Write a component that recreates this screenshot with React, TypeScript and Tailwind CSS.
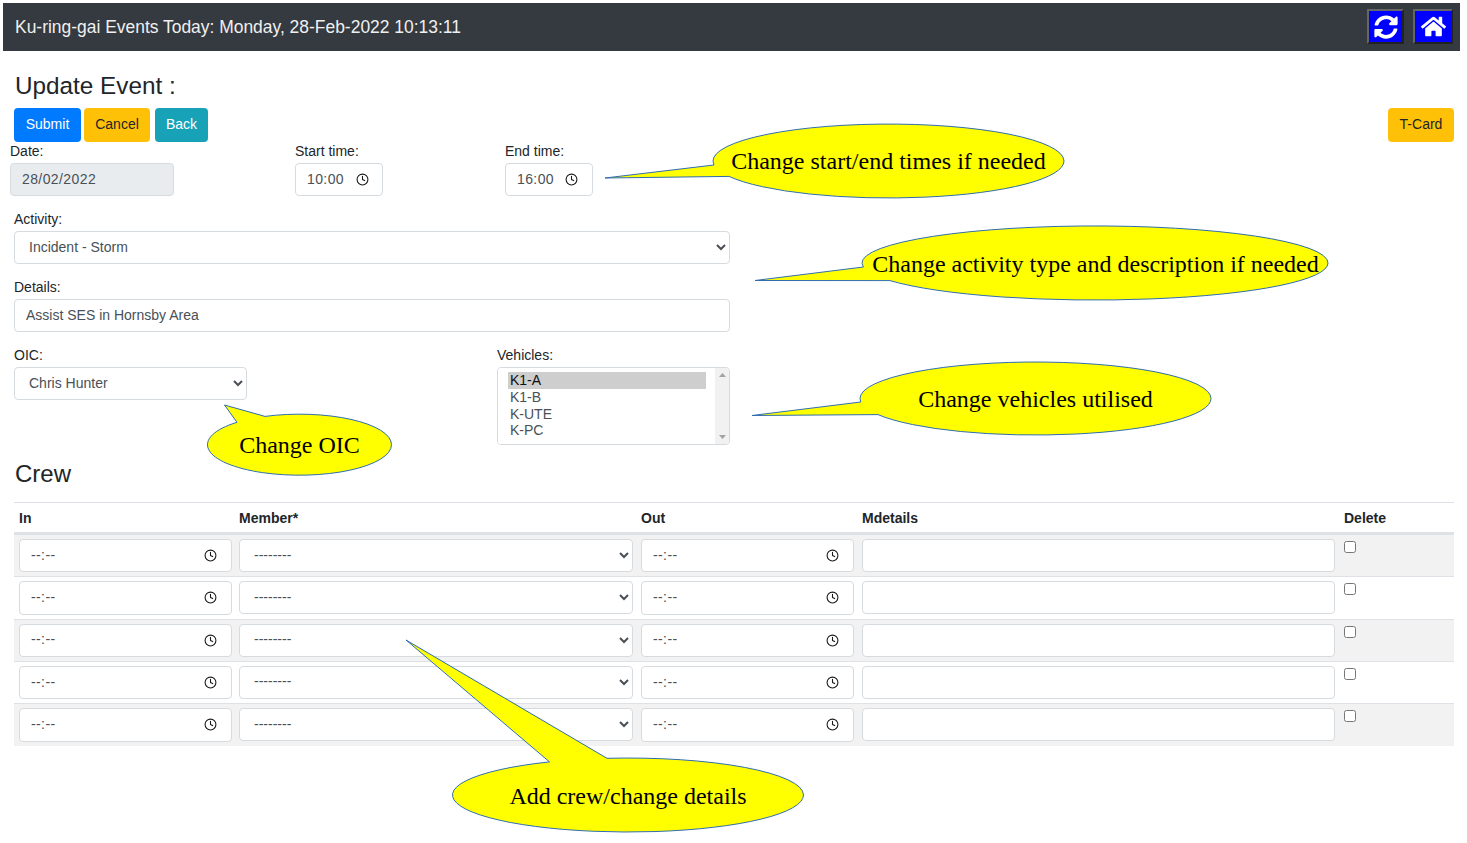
import React from 'react';
import { Clock } from 'lucide-react';
import { FaHome, FaSyncAlt } from 'react-icons/fa';

const fieldClass =
  'block h-[33px] rounded-[4px] border border-[#d6dbe0] px-[11px] pb-[2px] text-sm text-[#495057]';
const selectClass =
  'block h-[33px] rounded-[4px] border border-[#d6dbe0] bg-white pl-[10px] pb-[2px] text-sm text-[#495057]';
const labelClass = 'block h-[21px] text-sm leading-[19px] text-[#212529]';
const btnClass = 'h-[34px] rounded-[4px] pb-[2px] text-sm';
const crewCols = 'grid grid-cols-[221px_402px_221px_481px_1fr]';

// Speech bubbles drawn over the form
const callouts = [
  {
    d: 'M605 178 L714 165 A175.5 37 0 1 1 1064 161 A175.5 37 0 0 1 729 176.4 Z',
    text: 'Change start/end times if needed',
    x: 888.5,
    y: 169,
  },
  {
    d: 'M755 280.5 L863.4 267 A233 37 0 1 1 1328 263 A233 37 0 0 1 890 280.6 Z',
    text: 'Change activity type and description if needed',
    x: 1095.5,
    y: 272,
  },
  {
    d: 'M752 415.5 L860.8 402 A175.5 36.5 0 1 1 1211 398.5 A175.5 36.5 0 0 1 878 414.6 Z',
    text: 'Change vehicles utilised',
    x: 1035.5,
    y: 407,
  },
  {
    d: 'M224.5 405 L265 416.4 A92 30.5 0 0 1 391.5 444.7 A92 30.5 0 1 1 237 422.3 Z',
    text: 'Change OIC',
    x: 299.5,
    y: 453,
  },
  {
    d: 'M406 640 L607 758.3 A175.5 37 0 0 1 803.5 795 A175.5 37 0 1 1 549.5 761.9 Z',
    text: 'Add crew/change details',
    x: 628,
    y: 804,
  },
];

// 24 hour time box, the browser's own time input follows its locale
const TimeField: React.FC<{ value?: string; className: string }> = ({ value = '--:--', className }) => (
  <div className={`flex items-center rounded-[4px] border border-[#d6dbe0] bg-white pl-[11px] ${className}`}>
    <input
      type="text"
      defaultValue={value}
      className="min-w-0 flex-1 bg-transparent pb-[2px] text-sm tracking-[0.4px] text-[#495057]"
    />
    <Clock className="h-[13px] w-[13px] shrink-0 text-[#1a1a1a]" strokeWidth={2} />
  </div>
);

const CrewRow: React.FC<{ striped: boolean }> = ({ striped }) => (
  <div className={`${crewCols} border-t border-[#dee2e6] ${striped ? 'bg-[#f2f2f2]' : ''}`}>
    <div className="p-1 pl-[5px]">
      <TimeField className="h-[33.33px] w-[213px] pr-[14px]" />
    </div>
    <div className="p-1">
      <select className={`${selectClass} h-[33.33px] w-[394px]`} defaultValue="">
        <option value="">--------</option>
      </select>
    </div>
    <div className="p-1">
      <TimeField className="h-[33.33px] w-[213px] pr-[14px]" />
    </div>
    <div className="p-1">
      <input type="text" className={`${fieldClass} h-[33.33px] w-[473px] bg-white`} />
    </div>
    <div className="p-1 pl-[5px]">
      <input type="checkbox" className="mt-[2px] block h-[12px] w-[12px]" />
    </div>
  </div>
);

export default function App() {
  return (
    <div className="relative h-[843px] w-[1467px] overflow-hidden bg-white pt-[3px] font-['Liberation_Sans',sans-serif] text-[#212529]">
      {/* Top bar */}
      <nav className="ml-[3px] mr-[7px] flex h-[48px] items-center justify-between bg-[#343a40] pl-3 pr-[7px]">
        <span className="text-[17.45px] text-[#f0f0f0]">Ku-ring-gai Events Today: Monday, 28-Feb-2022 10:13:11</span>
        <div className="-mt-px flex items-center gap-[9px]">
          <button className="flex h-[35px] w-[37px] items-center justify-center border-2 border-t-[#666666] border-r-[#222222] border-b-[#222222] border-l-[#666666] bg-[#0000ff] text-white">
            <FaSyncAlt className="h-[24px] w-[24px]" />
          </button>
          <button className="flex h-[35px] w-[40px] items-center justify-center border-2 border-t-[#666666] border-r-[#222222] border-b-[#222222] border-l-[#666666] bg-[#0000ff] text-white">
            <FaHome className="h-[25px] w-[25px]" />
          </button>
        </div>
      </nav>

      <main className="pl-[14px] pr-[13px]">
        <h1 className="mt-[21px] h-[36px] pl-px text-[24.3px] leading-[28px]">Update Event :</h1>

        <div className="flex justify-between">
          <div className="flex">
            <button className={`${btnClass} w-[67px] bg-[#007bff] text-white`}>Submit</button>
            <button className={`${btnClass} ml-[3px] w-[66px] bg-[#ffc107] text-[#212529]`}>Cancel</button>
            <button className={`${btnClass} ml-[5px] w-[53px] bg-[#17a2b8] text-white`}>Back</button>
          </div>
          <button className={`${btnClass} w-[66px] bg-[#ffc107] text-[#212529]`}>T-Card</button>
        </div>

        {/* Date and times */}
        <div className="-ml-1 flex">
          <div className="w-[285px]">
            <label className={labelClass}>Date:</label>
            <input
              type="text"
              readOnly
              defaultValue="28/02/2022"
              className={`${fieldClass} w-[164px] bg-[#e9ecef] tracking-[0.4px]`}
            />
          </div>
          <div className="w-[210px]">
            <label className={labelClass}>Start time:</label>
            <TimeField value="10:00" className="h-[33px] w-[88px] pr-[13px]" />
          </div>
          <div>
            <label className={labelClass}>End time:</label>
            <TimeField value="16:00" className="h-[33px] w-[88px] pr-[14px]" />
          </div>
        </div>

        <div className="mt-[14px] w-[716px]">
          <label className={labelClass}>Activity:</label>
          <select className={`${selectClass} w-full`} defaultValue="storm">
            <option value="storm">Incident - Storm</option>
          </select>
        </div>

        <div className="mt-[14px] w-[716px]">
          <label className={labelClass}>Details:</label>
          <input type="text" defaultValue="Assist SES in Hornsby Area" className={`${fieldClass} w-full bg-white`} />
        </div>

        <div className="mt-[14px] flex">
          <div className="w-[483px]">
            <label className={labelClass}>OIC:</label>
            <select className={`${selectClass} w-[233px]`} defaultValue="chris">
              <option value="chris">Chris Hunter</option>
            </select>
          </div>
          <div>
            <label className={labelClass}>Vehicles:</label>
            <div className="flex h-[78px] w-[233px] overflow-hidden rounded-[4px] border border-[#d6dbe0] bg-white">
              <select
                multiple
                defaultValue={['K1-A']}
                className="block h-full w-[208px] overflow-hidden bg-white pt-[4px] pl-[10px] text-sm text-[#495057]"
              >
                <option className="px-[2px]" value="K1-A">K1-A</option>
                <option className="px-[2px]" value="K1-B">K1-B</option>
                <option className="px-[2px]" value="K-UTE">K-UTE</option>
                <option className="px-[2px]" value="K-PC">K-PC</option>
              </select>
              {/* listbox scrollbar */}
              <div className="ml-auto flex w-[14px] flex-col items-center justify-between bg-[#f1f1f1] py-[5px]">
                <svg width="7" height="4" viewBox="0 0 7 4">
                  <path d="M3.5 0 L7 4 L0 4 Z" fill="#a3a3a3" />
                </svg>
                <svg width="7" height="4" viewBox="0 0 7 4">
                  <path d="M0 0 L7 0 L3.5 4 Z" fill="#a3a3a3" />
                </svg>
              </div>
            </div>
          </div>
        </div>

        <h2 className="mt-[15px] h-[42px] pl-px text-2xl leading-[27px]">Crew</h2>

        {/* Crew table */}
        <div className="w-[1440px] text-sm">
          <div className={`${crewCols} h-[32px] items-center border-t border-b-2 border-t-[#dee2e6] border-b-[#dee2e6] pt-px font-bold`}>
            <div className="pl-[5px]">In</div>
            <div className="pl-1">Member*</div>
            <div className="pl-1">Out</div>
            <div className="pl-1">Mdetails</div>
            <div className="pl-[5px]">Delete</div>
          </div>
          {[0, 1, 2, 3, 4].map((i) => (
            <CrewRow key={i} striped={i % 2 === 0} />
          ))}
        </div>
      </main>

      {/* Annotations */}
      <svg
        className="pointer-events-none absolute left-0 top-0 h-[843px] w-[1467px] font-['Liberation_Serif',serif] text-2xl"
        viewBox="0 0 1467 843"
      >
        {callouts.map((c) => (
          <g key={c.text}>
            <path d={c.d} fill="#ffff00" stroke="#2f6db0" strokeWidth="1" />
            <text x={c.x} y={c.y} textAnchor="middle" fill="#000000">
              {c.text}
            </text>
          </g>
        ))}
      </svg>
    </div>
  );
}
